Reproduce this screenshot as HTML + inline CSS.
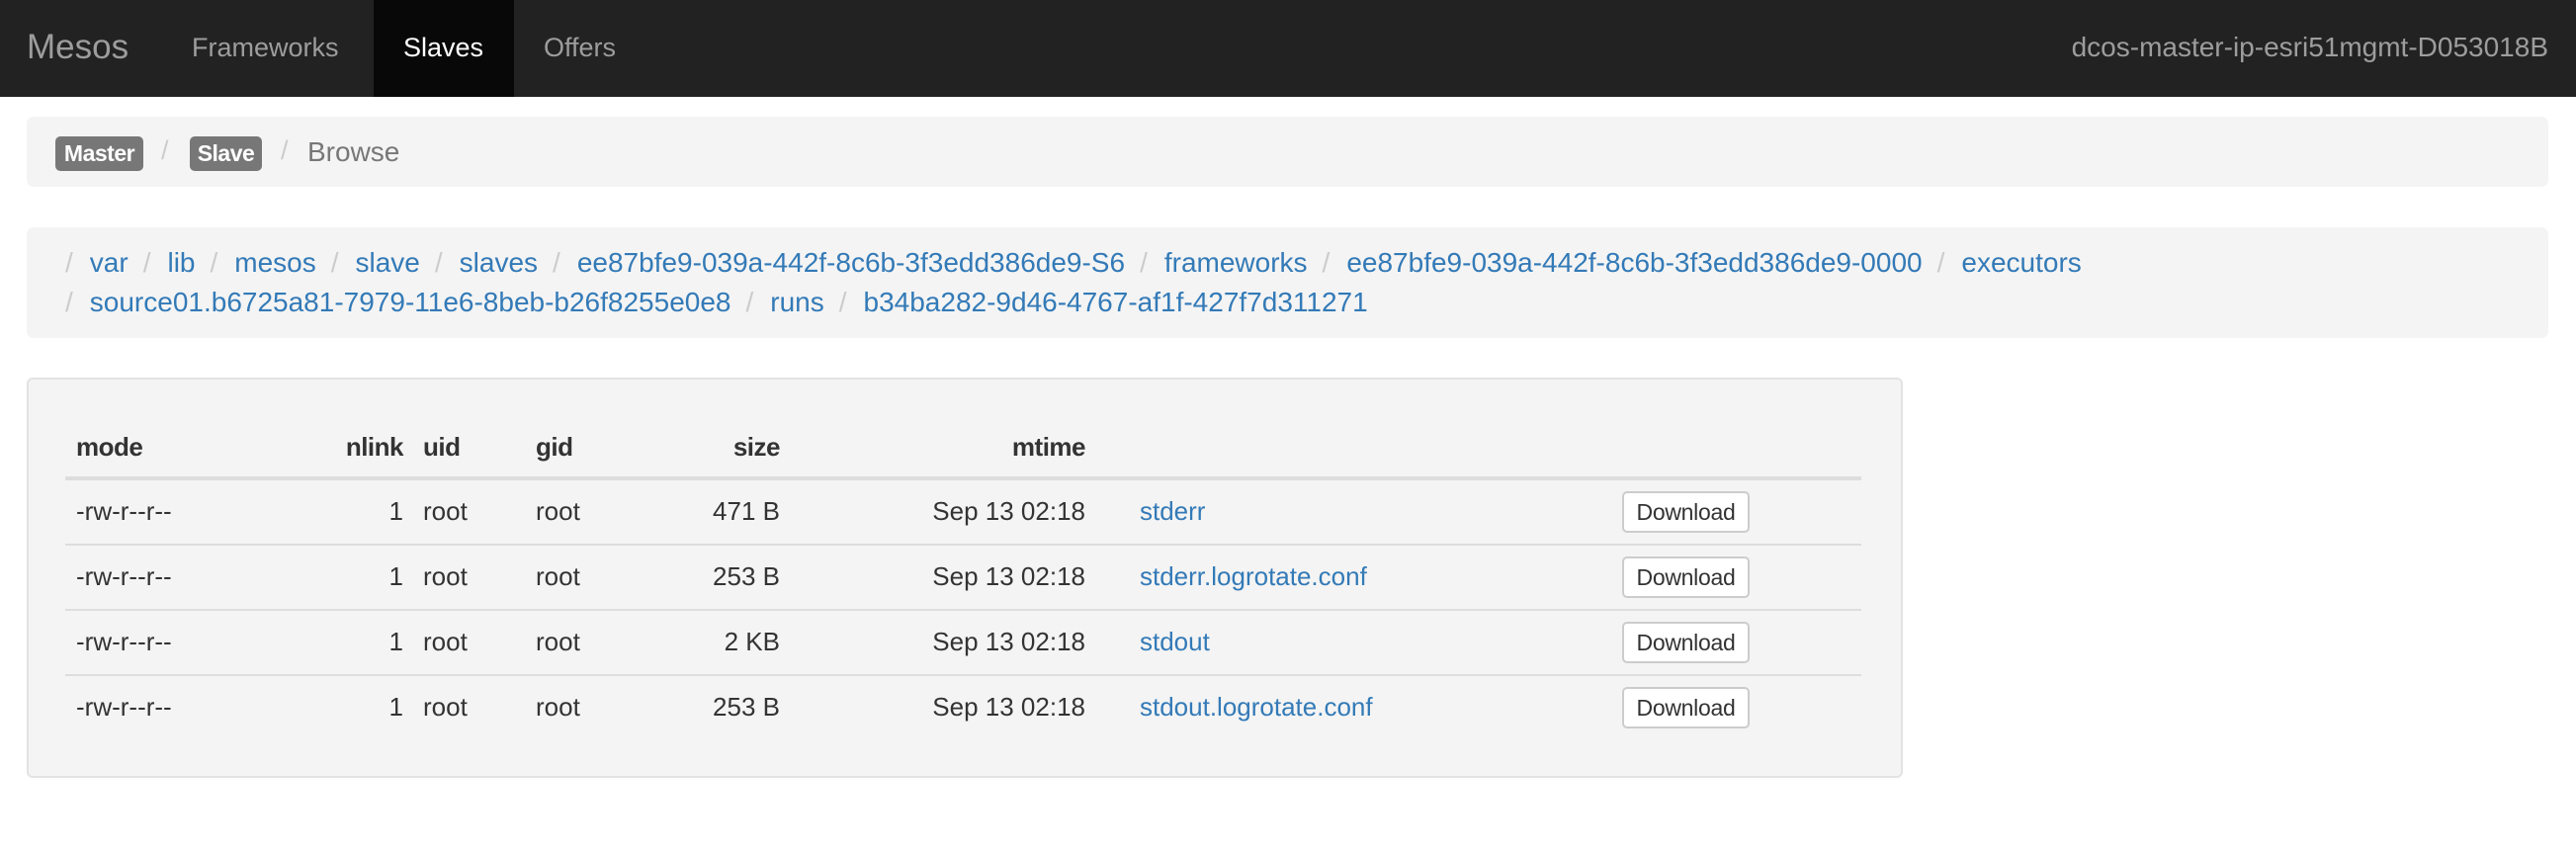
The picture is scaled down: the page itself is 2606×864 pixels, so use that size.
<!DOCTYPE html>
<html><head><meta charset="utf-8"><style>
*{margin:0;padding:0;box-sizing:border-box}
body{width:2606px;height:864px;background:#fff;font-family:"Liberation Sans",Arial,sans-serif;color:#333;position:relative;overflow:hidden}
.a{position:absolute;white-space:nowrap}
.nav{position:absolute;left:0;top:0;width:2606px;height:98px;background:#222}
.nv{position:absolute;top:0;height:98px;line-height:96px;font-size:27px;color:#9d9d9d}
.bc{position:absolute;left:27px;width:2551px;background:#f4f4f4;border-radius:7px}
.lbl{position:absolute;top:138px;height:35px;line-height:35px;background:#777;color:#fff;font-weight:bold;font-size:23px;border-radius:5px;text-align:center;letter-spacing:-0.5px}
.sep{color:#ccc}
a{color:#337ab7;text-decoration:none}
.line{position:absolute;left:66px;font-size:28px;white-space:nowrap}
.line .sep{margin:0 17px 0 0}
.line a{margin-right:15px}
.well{position:absolute;left:27px;top:382px;width:1898px;height:405px;background:#f4f4f4;border:2px solid #e3e3e3;border-radius:6px}
.c{position:absolute;font-size:26px;white-space:nowrap}
.r{text-align:right}
.h{font-weight:bold;letter-spacing:-0.5px}
.hr{position:absolute;left:66px;width:1817px;height:2px;background:#ddd}
.btn{position:absolute;left:1641px;width:129px;height:42px;background:#fff;border:2px solid #ccc;border-radius:5px;font-size:23px;line-height:38px;text-align:center;color:#333;letter-spacing:-0.3px}
</style></head><body>
<div class="nav"></div>
<div class="nv" style="left:27px;font-size:35px;color:#9d9d9d">Mesos</div>
<div class="nv" style="left:194px">Frameworks</div>
<div style="position:absolute;left:378px;top:0;width:142px;height:98px;background:#080808"></div>
<div class="nv" style="left:408px;color:#fff">Slaves</div>
<div class="nv" style="left:550px">Offers</div>
<div class="nv" style="right:28px;font-size:28px">dcos-master-ip-esri51mgmt-D053018B</div>

<div class="bc" style="top:118px;height:71px"></div>
<div class="lbl" style="left:56px;width:89px">Master</div>
<div class="a sep" style="left:163px;top:137px;font-size:27px">/</div>
<div class="lbl" style="left:192px;width:73px">Slave</div>
<div class="a sep" style="left:284px;top:137px;font-size:27px">/</div>
<div class="a" style="left:311px;top:138px;font-size:28px;color:#777">Browse</div>

<div class="bc" style="top:230px;height:112px"></div>
<div class="line" style="top:250px"><span class="sep">/</span><a>var</a><span class="sep">/</span><a>lib</a><span class="sep">/</span><a>mesos</a><span class="sep">/</span><a>slave</a><span class="sep">/</span><a>slaves</a><span class="sep">/</span><a>ee87bfe9-039a-442f-8c6b-3f3edd386de9-S6</a><span class="sep">/</span><a>frameworks</a><span class="sep">/</span><a>ee87bfe9-039a-442f-8c6b-3f3edd386de9-0000</a><span class="sep">/</span><a>executors</a></div>
<div class="line" style="top:290px"><span class="sep">/</span><a>source01.b6725a81-7979-11e6-8beb-b26f8255e0e8</a><span class="sep">/</span><a>runs</a><span class="sep">/</span><a>b34ba282-9d46-4767-af1f-427f7d311271</a></div>

<div class="well"></div>
<div class="c h" style="left:77px;top:437px">mode</div>
<div class="c h r" style="right:2198px;top:437px">nlink</div>
<div class="c h" style="left:428px;top:437px">uid</div>
<div class="c h" style="left:542px;top:437px">gid</div>
<div class="c h r" style="right:1817px;top:437px">size</div>
<div class="c h r" style="right:1508px;top:437px">mtime</div>
<div class="hr" style="top:482px;height:4px"></div>

<div class="c" style="left:77px;top:502px">-rw-r--r--</div><div class="c r" style="right:2198px;top:502px">1</div><div class="c" style="left:428px;top:502px">root</div><div class="c" style="left:542px;top:502px">root</div><div class="c r" style="right:1817px;top:502px">471 B</div><div class="c r" style="right:1508px;top:502px">Sep 13 02:18</div><div class="c" style="left:1153px;top:502px"><a>stderr</a></div><div class="btn" style="top:497px">Download</div>
<div class="hr" style="top:550px"></div>
<div class="c" style="left:77px;top:568px">-rw-r--r--</div><div class="c r" style="right:2198px;top:568px">1</div><div class="c" style="left:428px;top:568px">root</div><div class="c" style="left:542px;top:568px">root</div><div class="c r" style="right:1817px;top:568px">253 B</div><div class="c r" style="right:1508px;top:568px">Sep 13 02:18</div><div class="c" style="left:1153px;top:568px"><a>stderr.logrotate.conf</a></div><div class="btn" style="top:563px">Download</div>
<div class="hr" style="top:616px"></div>
<div class="c" style="left:77px;top:634px">-rw-r--r--</div><div class="c r" style="right:2198px;top:634px">1</div><div class="c" style="left:428px;top:634px">root</div><div class="c" style="left:542px;top:634px">root</div><div class="c r" style="right:1817px;top:634px">2 KB</div><div class="c r" style="right:1508px;top:634px">Sep 13 02:18</div><div class="c" style="left:1153px;top:634px"><a>stdout</a></div><div class="btn" style="top:629px">Download</div>
<div class="hr" style="top:682px"></div>
<div class="c" style="left:77px;top:700px">-rw-r--r--</div><div class="c r" style="right:2198px;top:700px">1</div><div class="c" style="left:428px;top:700px">root</div><div class="c" style="left:542px;top:700px">root</div><div class="c r" style="right:1817px;top:700px">253 B</div><div class="c r" style="right:1508px;top:700px">Sep 13 02:18</div><div class="c" style="left:1153px;top:700px"><a>stdout.logrotate.conf</a></div><div class="btn" style="top:695px">Download</div>
</body></html>
